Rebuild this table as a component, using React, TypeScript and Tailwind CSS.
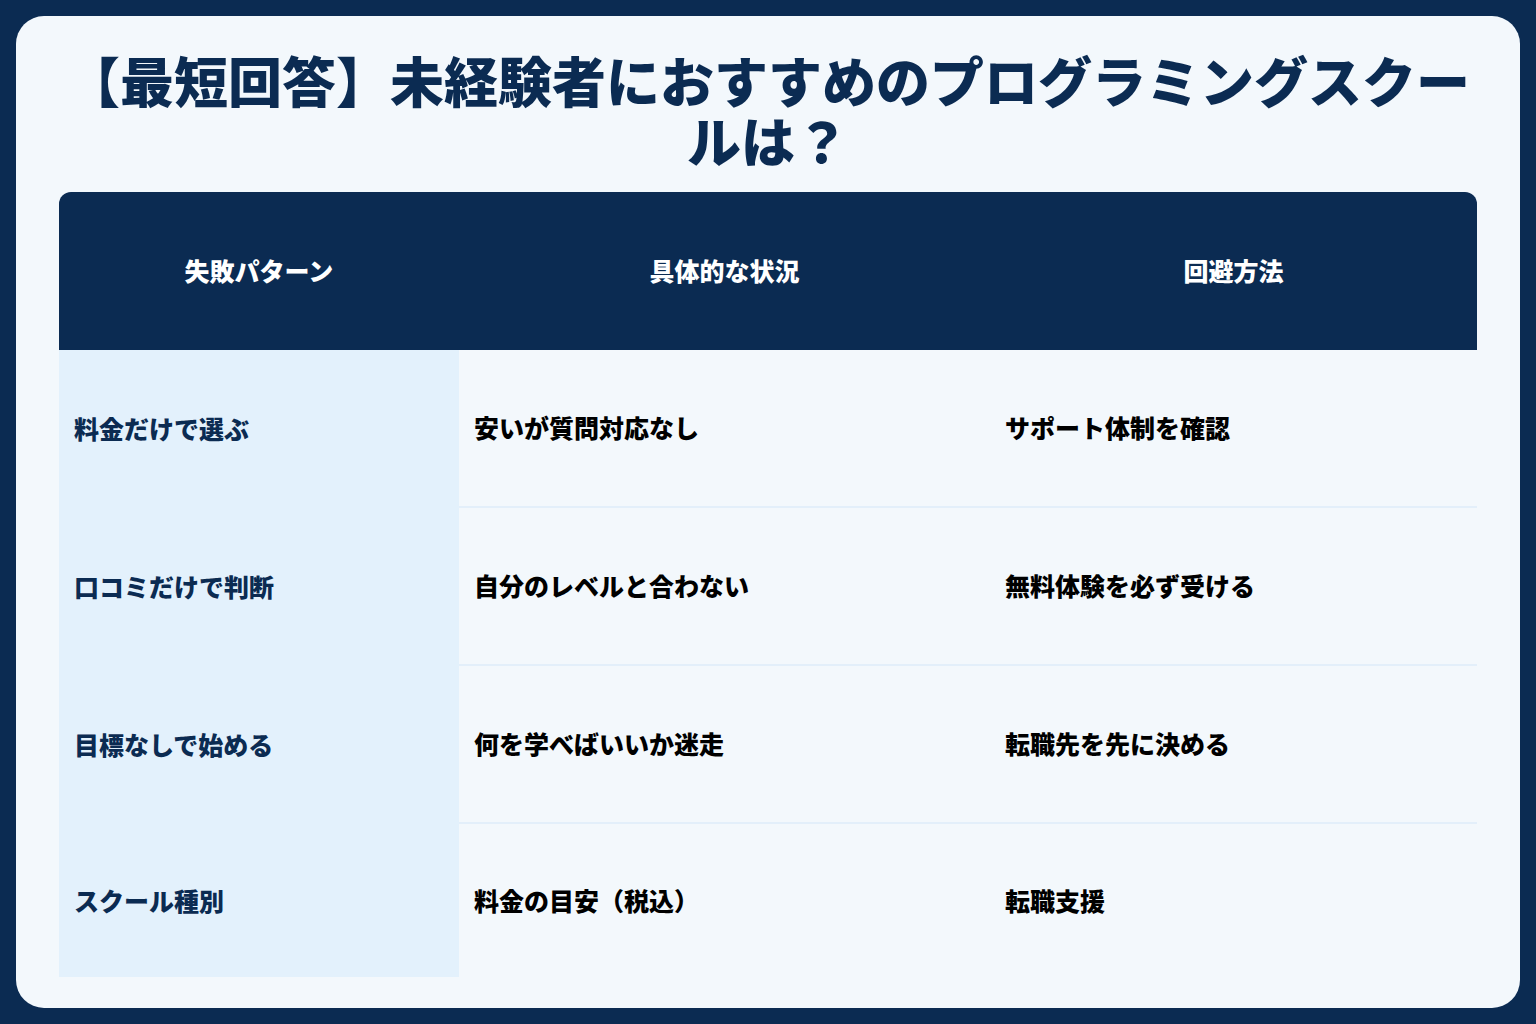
const rows = [
  ['料金だけで選ぶ', '安いが質問対応なし', 'サポート体制を確認'],
  ['口コミだけで判断', '自分のレベルと合わない', '無料体験を必ず受ける'],
  ['目標なしで始める', '何を学べばいいか迷走', '転職先を先に決める'],
  ['スクール種別', '料金の目安（税込）', '転職支援'],
]

const font = { fontFamily: '"Noto Sans CJK JP", "Noto Sans", sans-serif' }

export default function App() {
  return (
    <div className="min-h-screen bg-[#0b2b52] p-4" style={font}>
      <div className="flex h-[992px] flex-col rounded-[28px] bg-[#f3f8fc] px-[43px] pt-[34px]">
        <h1 className="text-center text-[54px] font-black leading-[60px] text-[#0b2b52]">
          【最短回答】未経験者におすすめのプログラミングスクールは？
        </h1>
        <div className="mt-[22px]">
          <div className="grid h-[158px] grid-cols-[400px_531px_487px] items-center rounded-t-[12px] bg-[#0b2b52] text-center text-[25px] font-black text-white">
            <div>失敗パターン</div>
            <div>具体的な状況</div>
            <div>回避方法</div>
          </div>
          {rows.map((r, i) => {
            const last = i === rows.length - 1
            const h = last ? 'h-[153px]' : 'h-[158px]'
            const line = last ? '' : 'border-b-2 border-[#e3effa]'
            return (
              <div key={i} className="grid grid-cols-[400px_531px_487px] text-[25px] font-black">
                <div className={`flex ${h} items-center bg-[#e3f1fc] px-[15px] text-[#0b2b52]`}>{r[0]}</div>
                <div className={`flex ${h} items-center px-[15px] text-black ${line}`}>{r[1]}</div>
                <div className={`flex ${h} items-center px-[15px] text-black ${line}`}>{r[2]}</div>
              </div>
            )
          })}
        </div>
      </div>
    </div>
  )
}
